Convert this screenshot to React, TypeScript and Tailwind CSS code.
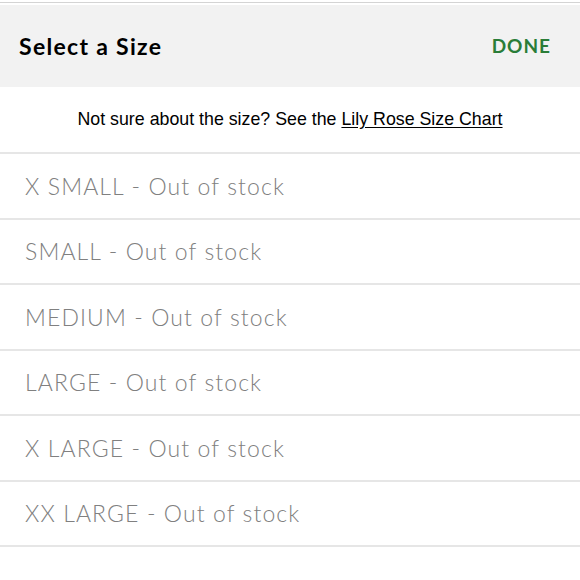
const SIZES = ["X SMALL", "SMALL", "MEDIUM", "LARGE", "X LARGE", "XX LARGE"];

export default function App() {
  return (
    <div className="w-[580px] h-[580px] bg-white overflow-hidden">
      <div className="h-[2px]" />
      <div className="h-px bg-[#d4d4d4]" />
      <div className="h-[2px]" />
      <div className="h-[82px] bg-[#f2f2f2] flex items-center justify-between pl-[19px] pr-[29px]">
        <h1 className="text-[23px] font-bold text-black font-['Lato',sans-serif] tracking-[1.3px]">Select a Size</h1>
        <button className="text-[19px] font-bold text-[#2a7d38] font-['Lato',sans-serif] tracking-[1px]">DONE</button>
      </div>
      <div className="h-[65px] flex items-center justify-center text-[17.8px] text-black font-['Liberation_Sans',sans-serif]">
        <span>
          Not sure about the size? See the <span className="underline underline-offset-[2px]">Lily Rose Size Chart</span>
        </span>
      </div>
      <ul className="border-t-2 border-[#e6e6e6]">
        {SIZES.map((s) => (
          <li
            key={s}
            className="h-[65.5px] flex items-center pl-[25px] border-b-2 border-[#e6e6e6] text-[23px] font-light text-[#808080] font-['Lato',sans-serif] tracking-[1.1px]"
          >
            {s} - Out of stock
          </li>
        ))}
      </ul>
    </div>
  );
}
